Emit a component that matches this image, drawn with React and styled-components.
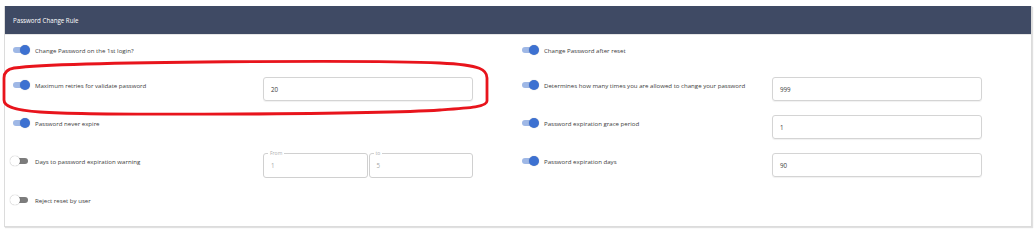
import React from 'react'
import styled, { createGlobalStyle } from 'styled-components'

const GlobalStyle = createGlobalStyle`
  html, body {
    margin: 0;
    padding: 0;
    background: #fff;
  }
  body {
    font-family: "Open Sans", "Liberation Sans", sans-serif;
  }
  * { box-sizing: border-box; }
`

const left = [
  { label: 'Change Password on the 1st login?', on: true },
  { label: 'Maximum retries for validate password', on: true, value: '20' },
  { label: 'Password never expire', on: true },
  { label: 'Days to password expiration warning', on: false, range: ['1', '5'] },
  { label: 'Reject reset by user', on: false },
]

const right = [
  { label: 'Change Password after reset', on: true },
  { label: 'Determines how many times you are allowed to change your password', on: true, value: '999' },
  { label: 'Password expiration grace period', on: true, value: '1' },
  { label: 'Password expiration days', on: true, value: '90' },
]

const Toggle = ({ on }) => (
  <SwitchWrap>
    <Track $on={on} />
    <Thumb $on={on} />
  </SwitchWrap>
)

const Setting = ({ item }) => (
  <Row>
    <LabelCell>
      <Toggle on={item.on} />
      <Label>{item.label}</Label>
    </LabelCell>
    {item.value && <Input>{item.value}</Input>}
    {item.range && (
      <RangeWrap>
        <Outlined>
          <Legend>From</Legend>
          <Muted>{item.range[0]}</Muted>
        </Outlined>
        <Outlined>
          <Legend>to</Legend>
          <Muted>{item.range[1]}</Muted>
        </Outlined>
      </RangeWrap>
    )}
  </Row>
)

const App = () => {
  return (
    <Page>
      <GlobalStyle />
      <Card>
        <Header>Password Change Rule</Header>
        <Body>
          <Column>
            {left.map((item) => <Setting key={item.label} item={item} />)}
          </Column>
          <Column>
            {right.map((item) => <Setting key={item.label} item={item} />)}
          </Column>
        </Body>
      </Card>
      <Marker viewBox="0 0 1035 229" width="1035" height="229">
        <path
          d="M 14 68 C 70 61 380 60 440 63 C 482 65 487 70 487 78 L 487 101 C 487 107 470 108 440 110 C 380 114 100 116 40 112 C 12 110 4 106 4 100 L 4 78 C 4 72 8 69 14 68 Z"
          fill="none"
          stroke="#e8141c"
          strokeWidth="2.8"
        />
      </Marker>
    </Page>
  )
}

const Page = styled.div`
  position: relative;
  width: 1035px;
  height: 229px;
  padding: 6px 4px 0 4px;
`

const Card = styled.div`
  width: 1028px;
  border: 1px solid #dcdcdc;
  border-top: none;
  box-shadow: 1px 1px 1px rgba(0, 0, 0, 0.12);
  background: #fff;
`

const Header = styled.div`
  height: 29px;
  background: #3f4a64;
  color: #fff;
  font-size: 6.2px;
  display: flex;
  align-items: center;
  padding-left: 8px;
  border-bottom: 1px solid #e6e6e6;
`

const Body = styled.div`
  display: grid;
  grid-template-columns: 509px 1fr;
  padding: 7px 8px 10px 8px;
`

const Column = styled.div`
  display: grid;
  grid-template-rows: 21px 24px 24px 25px 24px;
  row-gap: 14px;
  align-content: start;
`

const Row = styled.div`
  display: grid;
  grid-template-columns: 250px 210px;
  align-items: start;
`

const LabelCell = styled.div`
  display: flex;
  align-items: center;
  gap: 6px;
  padding-top: 3px;
`

const Label = styled.span`
  font-size: 6.1px;
  line-height: 9px;
  color: #3c3c3c;
`

const SwitchWrap = styled.span`
  position: relative;
  width: 16px;
  height: 10px;
  flex: none;
`

const Track = styled.span`
  position: absolute;
  left: 0;
  top: 2px;
  width: 15px;
  height: 6px;
  border-radius: 3px;
  background: ${(p) => (p.$on ? '#9fb8e6' : '#7c7c7c')};
`

const Thumb = styled.span`
  position: absolute;
  top: 0;
  left: ${(p) => (p.$on ? '7px' : '-3px')};
  width: 10px;
  height: 10px;
  border-radius: 50%;
  background: ${(p) => (p.$on ? '#3d71d1' : '#fff')};
  box-shadow: ${(p) => (p.$on ? '0 0 1px rgba(0,0,0,0.3)' : '0 0 1px rgba(0,0,0,0.45)')};
`

const Input = styled.div`
  height: 24px;
  border: 1px solid #d4d4d4;
  border-radius: 3px;
  display: flex;
  align-items: center;
  padding-left: 7px;
  font-size: 6.2px;
  color: #3a3a3a;
  box-shadow: 0 1px 1px rgba(0, 0, 0, 0.06);
`

const RangeWrap = styled.div`
  display: grid;
  grid-template-columns: 1fr 1fr;
  gap: 1px;
`

const Outlined = styled.div`
  position: relative;
  height: 25px;
  border: 1px solid #d0d0d0;
  border-radius: 3px;
  display: flex;
  align-items: center;
  padding-left: 7px;
`

const Legend = styled.span`
  position: absolute;
  top: -4px;
  left: 4px;
  padding: 0 2px;
  background: #fff;
  font-size: 5px;
  line-height: 6px;
  color: #b0b0b0;
`

const Muted = styled.span`
  font-size: 6.2px;
  color: #a8a8a8;
`

const Marker = styled.svg`
  position: absolute;
  top: 0;
  left: 0;
  pointer-events: none;
`

export default App
